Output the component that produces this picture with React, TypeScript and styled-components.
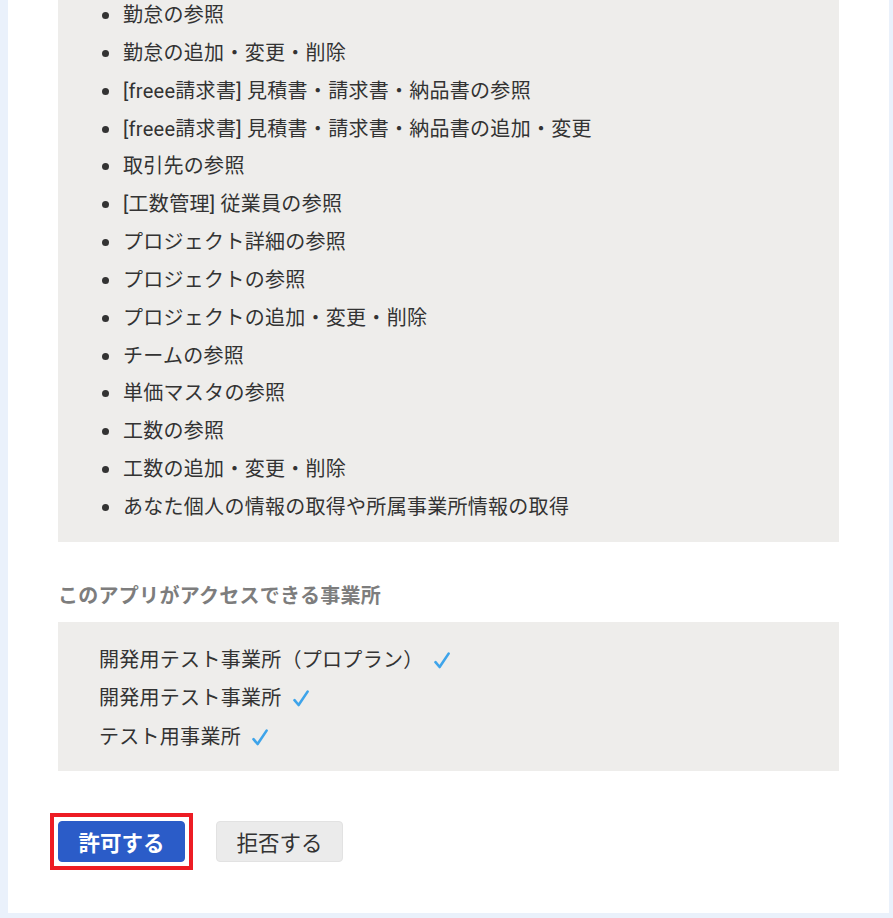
import * as React from "react";
import styled, { createGlobalStyle } from "styled-components";

const GlobalStyle = createGlobalStyle`
    html, body {
        margin: 0;
        padding: 0;
        background: #eaf1fb;
    }
    body {
        padding: 0 4px 4px 8px;
        font-family: Roboto, "Noto Sans CJK JP", sans-serif;
        color: #333333;
    }
`;

const scopes = [
    "勤怠の参照",
    "勤怠の追加・変更・削除",
    "[freee請求書] 見積書・請求書・納品書の参照",
    "[freee請求書] 見積書・請求書・納品書の追加・変更",
    "取引先の参照",
    "[工数管理] 従業員の参照",
    "プロジェクト詳細の参照",
    "プロジェクトの参照",
    "プロジェクトの追加・変更・削除",
    "チームの参照",
    "単価マスタの参照",
    "工数の参照",
    "工数の追加・変更・削除",
    "あなた個人の情報の取得や所属事業所情報の取得",
];

const companies = ["開発用テスト事業所（プロプラン）", "開発用テスト事業所", "テスト用事業所"];

const Card = styled.div`
    background: #ffffff;
    padding: 0 50px 43px;
`;

const GrayBox = styled.div`
    background: #eeedeb;
`;

const ScopeList = styled.ul`
    margin: 0;
    padding: 0 0 12px 65px;
    list-style: none;
`;

const ScopeItem = styled.li`
    position: relative;
    font-size: 20px;
    line-height: 30px;
    letter-spacing: 0.28px;
    margin-bottom: 7.85px;
    &::before {
        content: "";
        position: absolute;
        left: -21px;
        top: 12px;
        width: 7px;
        height: 7px;
        border-radius: 50%;
        background: #333333;
    }
`;

const SectionTitle = styled.h3`
    margin: 41px 0 12px;
    font-size: 20px;
    line-height: 27px;
    letter-spacing: 0.28px;
    font-weight: 700;
    color: #7d7d7d;
`;

const CompanyList = styled.div`
    padding: 19px 41px 15px;
    display: flex;
    flex-direction: column;
`;

const CompanyRow = styled.div`
    font-size: 20px;
    line-height: 38.5px;
    letter-spacing: 0.28px;
    display: flex;
    align-items: center;
    gap: 11px;
`;

const Check = () => (
    <svg width="16" height="17" viewBox="0 0 16 17" fill="none">
        <path
            d="M1.5 10.2 L5.6 15 L14.6 1.6"
            stroke="#3ea4ea"
            strokeWidth="2.6"
            strokeLinecap="round"
            strokeLinejoin="round"
        />
    </svg>
);

const Actions = styled.div`
    display: flex;
    align-items: center;
    gap: 23px;
    margin-top: 42px;
`;

const Highlight = styled.div`
    border: 4px solid #ed1c24;
    padding: 4px;
    margin-left: -8px;
    display: flex;
`;

const Button = styled.button<{ $primary?: boolean }>`
    height: 41px;
    padding: 0 18px;
    border-radius: 4px;
    font-family: Roboto, "Noto Sans CJK JP", sans-serif;
    font-size: 21.5px;
    cursor: pointer;
    font-weight: ${(p) => (p.$primary ? 700 : 400)};
    color: ${(p) => (p.$primary ? "#ffffff" : "#333333")};
    background: ${(p) => (p.$primary ? "#2b5cc8" : "#ebebeb")};
    border: 1px solid ${(p) => (p.$primary ? "#2b5cc8" : "#e2e2e2")};
    width: 127px;
`;

const App = () => {
    return (
        <>
            <GlobalStyle />
            <Card>
                <GrayBox>
                    <ScopeList>
                        {scopes.map((s) => (
                            <ScopeItem key={s}>{s}</ScopeItem>
                        ))}
                    </ScopeList>
                </GrayBox>
                <SectionTitle>このアプリがアクセスできる事業所</SectionTitle>
                <GrayBox>
                    <CompanyList>
                        {companies.map((c) => (
                            <CompanyRow key={c}>
                                {c}
                                <Check />
                            </CompanyRow>
                        ))}
                    </CompanyList>
                </GrayBox>
                <Actions>
                    <Highlight>
                        <Button $primary>許可する</Button>
                    </Highlight>
                    <Button>拒否する</Button>
                </Actions>
            </Card>
        </>
    );
};

export default App;
